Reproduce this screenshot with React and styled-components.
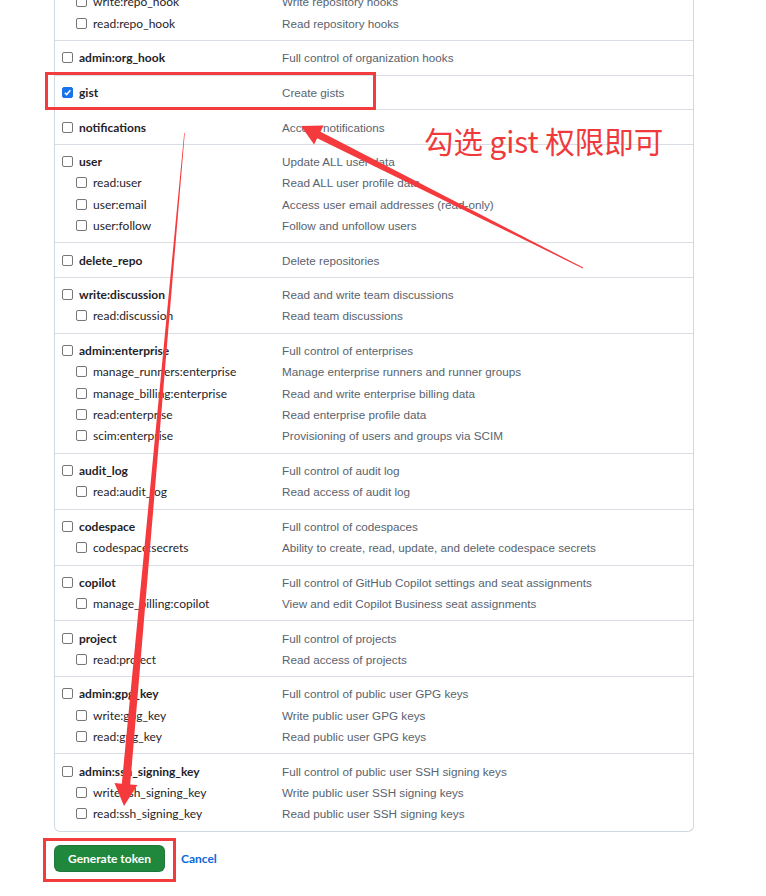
import React from 'react';
import styled, { createGlobalStyle } from 'styled-components';

const GlobalStyle = createGlobalStyle`
  html, body {
    margin: 0;
    padding: 0;
    background: #ffffff;
    overflow: hidden;
  }
  body {
    font-family: 'Liberation Sans', Arial, sans-serif;
    color: #1f2328;
  }
`;

// scope groups: first entry is the parent scope
const groups = [
  [
    ['admin:repo_hook', 'Full control of repository hooks'],
    ['write:repo_hook', 'Write repository hooks'],
    ['read:repo_hook', 'Read repository hooks'],
  ],
  [['admin:org_hook', 'Full control of organization hooks']],
  [['gist', 'Create gists', true]],
  [['notifications', 'Access notifications']],
  [
    ['user', 'Update ALL user data'],
    ['read:user', 'Read ALL user profile data'],
    ['user:email', 'Access user email addresses (read-only)'],
    ['user:follow', 'Follow and unfollow users'],
  ],
  [['delete_repo', 'Delete repositories']],
  [
    ['write:discussion', 'Read and write team discussions'],
    ['read:discussion', 'Read team discussions'],
  ],
  [
    ['admin:enterprise', 'Full control of enterprises'],
    ['manage_runners:enterprise', 'Manage enterprise runners and runner groups'],
    ['manage_billing:enterprise', 'Read and write enterprise billing data'],
    ['read:enterprise', 'Read enterprise profile data'],
    ['scim:enterprise', 'Provisioning of users and groups via SCIM'],
  ],
  [
    ['audit_log', 'Full control of audit log'],
    ['read:audit_log', 'Read access of audit log'],
  ],
  [
    ['codespace', 'Full control of codespaces'],
    ['codespace:secrets', 'Ability to create, read, update, and delete codespace secrets'],
  ],
  [
    ['copilot', 'Full control of GitHub Copilot settings and seat assignments'],
    ['manage_billing:copilot', 'View and edit Copilot Business seat assignments'],
  ],
  [
    ['project', 'Full control of projects'],
    ['read:project', 'Read access of projects'],
  ],
  [
    ['admin:gpg_key', 'Full control of public user GPG keys'],
    ['write:gpg_key', 'Write public user GPG keys'],
    ['read:gpg_key', 'Read public user GPG keys'],
  ],
  [
    ['admin:ssh_signing_key', 'Full control of public user SSH signing keys'],
    ['write:ssh_signing_key', 'Write public user SSH signing keys'],
    ['read:ssh_signing_key', 'Read public user SSH signing keys'],
  ],
];

// tapered arrow polygon from tail to tip
const arrowPoints = (tail, tip, tailW, baseW, headLen, headW) => {
  const dx = tip[0] - tail[0];
  const dy = tip[1] - tail[1];
  const len = Math.hypot(dx, dy);
  const ux = dx / len;
  const uy = dy / len;
  const nx = -uy;
  const ny = ux;
  const bx = tip[0] - ux * headLen;
  const by = tip[1] - uy * headLen;
  const pts = [
    [tail[0] + nx * tailW, tail[1] + ny * tailW],
    [bx + nx * baseW, by + ny * baseW],
    [bx + nx * headW, by + ny * headW],
    tip,
    [bx - nx * headW, by - ny * headW],
    [bx - nx * baseW, by - ny * baseW],
    [tail[0] - nx * tailW, tail[1] - ny * tailW],
  ];
  return pts.map((p) => p.map((v) => v.toFixed(1)).join(',')).join(' ');
};

const Checkbox = ({ checked }) => (
  <Box $checked={checked}>
    {checked && (
      <svg width="9" height="9" viewBox="0 0 10 10">
        <path d="M2 5.2 L4.1 7.3 L8.2 2.6" fill="none" stroke="#fff" strokeWidth="1.7" />
      </svg>
    )}
  </Box>
);

const App = () => {
  return (
    <Page>
      <GlobalStyle />
      <Scopes>
        {groups.map((group, gi) => (
          <Group key={gi}>
            {group.map(([name, desc, checked], ri) => (
              <Row key={name}>
                <NameCell $sub={ri > 0}>
                  <Checkbox checked={checked} />
                  <Name $sub={ri > 0}>{name}</Name>
                </NameCell>
                <Desc>{desc}</Desc>
              </Row>
            ))}
          </Group>
        ))}
      </Scopes>

      <Actions>
        <GenerateButton type="button">Generate token</GenerateButton>
        <CancelLink href="#">Cancel</CancelLink>
      </Actions>

      <Note>勾选 gist 权限即可</Note>

      <Annotations width="766" height="896" viewBox="0 0 766 896">
        <rect x="46.5" y="73.5" width="328" height="35" fill="none" stroke="#f23b3d" strokeWidth="3" />
        <rect x="44.5" y="839.5" width="130" height="41" fill="none" stroke="#f23b3d" strokeWidth="3" />
        <polygon points={arrowPoints([583, 268], [301, 126], 0.4, 3.6, 20, 10.5)} fill="#f43a3d" />
        <polygon points={arrowPoints([184.5, 133], [124, 806], 0.3, 4.2, 22, 11.5)} fill="#f43a3d" />
      </Annotations>
    </Page>
  );
};

const Page = styled.div`
  position: relative;
  width: 766px;
  height: 896px;
  overflow: hidden;
`;

const Scopes = styled.div`
  margin: -36px 0 0 54px;
  width: 640px;
  box-sizing: border-box;
  border: 1px solid #d1d9e0;
  border-top: none;
  border-radius: 0 0 6px 6px;
`;

const Group = styled.div`
  padding: 6px 0 6.3px 7px;
  & + & {
    border-top: 1px solid #d8dee4;
  }
`;

const Row = styled.div`
  display: grid;
  grid-template-columns: 220px 1fr;
  height: 21.3px;
  align-items: center;
`;

const NameCell = styled.div`
  display: flex;
  align-items: center;
  padding-left: ${(p) => (p.$sub ? '14px' : '0')};
`;

const Box = styled.span`
  display: inline-flex;
  align-items: center;
  justify-content: center;
  width: 11px;
  height: 11px;
  box-sizing: border-box;
  border-radius: 2px;
  border: 1px solid ${(p) => (p.$checked ? '#1a73e8' : '#767676')};
  background: ${(p) => (p.$checked ? '#1a73e8' : '#ffffff')};
  margin-right: 6px;
  flex: none;
`;

const Name = styled.span`
  font-family: Lato, 'Liberation Sans', sans-serif;
  font-size: 12px;
  font-weight: ${(p) => (p.$sub ? 400 : 700)};
  color: #1f2328;
  white-space: nowrap;
`;

const Desc = styled.span`
  font-size: 11.7px;
  color: #59636e;
  white-space: nowrap;
`;

const Actions = styled.div`
  display: flex;
  align-items: center;
  gap: 16px;
  margin: 13px 0 0 54px;
`;

const GenerateButton = styled.button`
  height: 27px;
  padding: 0 13px;
  border: 1px solid rgba(31, 35, 40, 0.15);
  border-radius: 6px;
  background: #1f883d;
  color: #ffffff;
  font-family: Lato, 'Liberation Sans', sans-serif;
  font-size: 12px;
  font-weight: 700;
  cursor: pointer;
`;

const CancelLink = styled.a`
  font-family: Lato, 'Liberation Sans', sans-serif;
  color: #0969da;
  font-size: 12px;
  font-weight: 700;
  text-decoration: none;
`;

const Note = styled.div`
  position: absolute;
  left: 424px;
  top: 120px;
  font-family: 'Noto Sans CJK SC', 'Microsoft YaHei', sans-serif;
  font-size: 29.5px;
  line-height: 40px;
  color: #f0393c;
  white-space: nowrap;
`;

const Annotations = styled.svg`
  position: absolute;
  left: 0;
  top: 0;
  pointer-events: none;
`;

export default App;
